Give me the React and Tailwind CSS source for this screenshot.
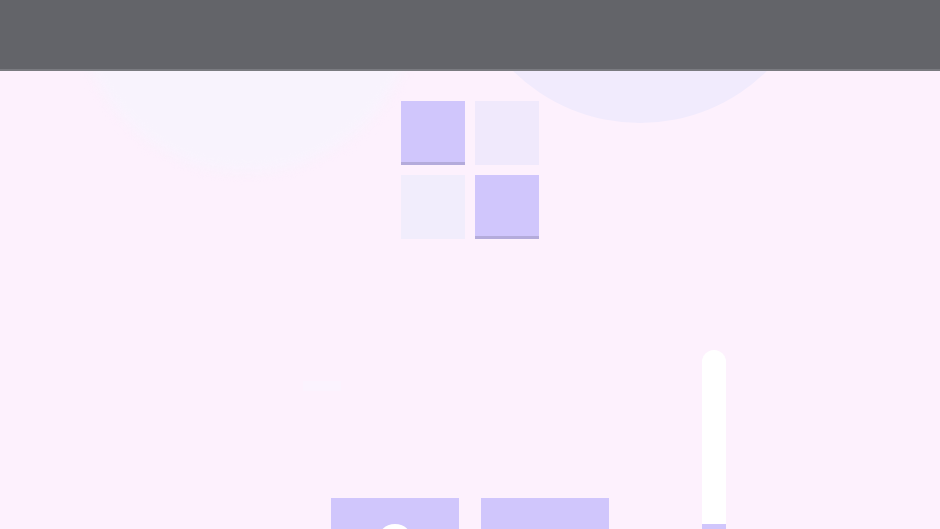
export default function App() {
  return (
    <div className="w-[940px] h-[529px] overflow-hidden bg-[#fdf1fd] flex flex-col" style={{ fontFamily: '"Liberation Sans", sans-serif' }}>
      <div className="h-[71px] shrink-0 bg-[#636469] border-b-2 border-[#7a7b80]" />
      <div className="relative flex-1 overflow-hidden">
        <div className="absolute left-[78px] top-[-237px] w-[338px] h-[338px] rounded-full bg-[#f8f3fd] blur-[6px]" />
        <div className="absolute left-[459px] top-[-310px] w-[362px] h-[362px] rounded-full bg-[#f1ebfd]" />
        <div className="absolute left-[303px] top-[310px] w-[38px] h-[10px] bg-[#fbf3fe]" />
        <div className="relative flex flex-col items-center pt-[30px]">
          <div className="grid grid-cols-2 gap-[10px]">
            <div className="w-[64px] h-[64px] bg-[#d0c6fc] border-b-[3px] border-[#b4abdb]" />
            <div className="w-[64px] h-[64px] bg-[#f0e9fc]" />
            <div className="w-[64px] h-[64px] bg-[#f1edfc]" />
            <div className="w-[64px] h-[64px] bg-[#d0c6fc] border-b-[3px] border-[#b4abdb]" />
          </div>
          <div className="flex items-start mt-[111px]">
            <div className="w-[24px] mr-[93px]" />
            <div className="flex gap-[22px] mt-[148px]">
              <div className="w-[128px] h-[80px] bg-[#d0c6fc] flex justify-center pt-[26px]">
                <div className="w-[36px] h-[36px] rounded-full bg-white shrink-0" />
              </div>
              <div className="w-[128px] h-[80px] bg-[#d0c6fc]" />
            </div>
            <div className="w-[24px] ml-[93px] flex flex-col">
              <div className="h-[174px] bg-white rounded-t-full" />
              <div className="h-[40px] bg-[#d0c6fc]" />
            </div>
          </div>
        </div>
      </div>
    </div>
  );
}
